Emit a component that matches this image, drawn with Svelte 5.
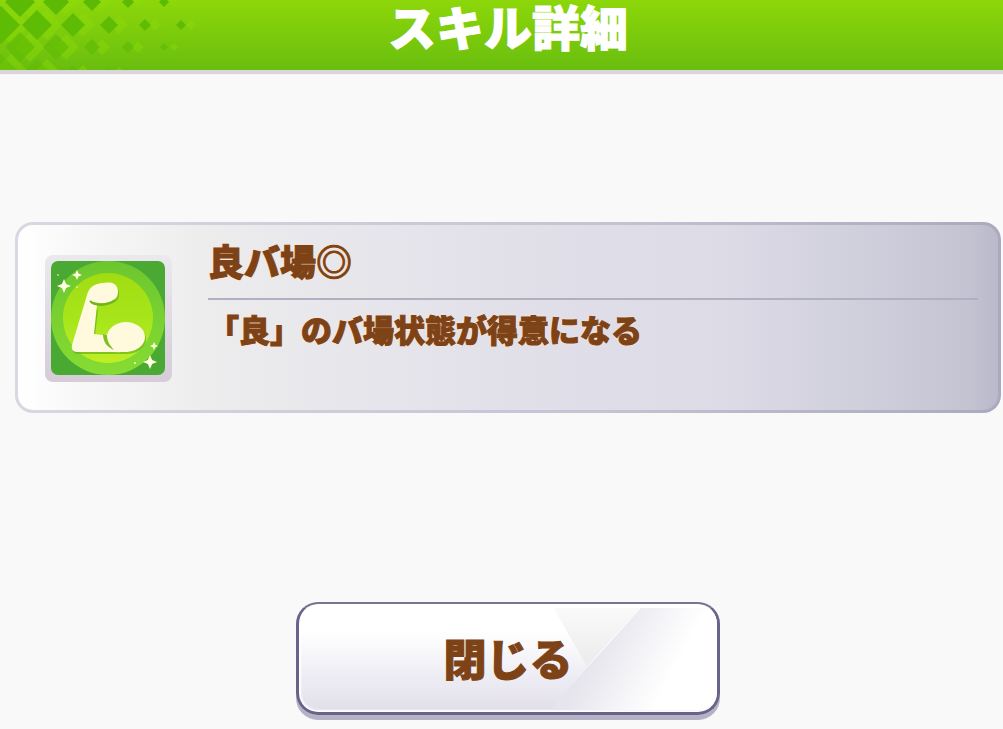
<script>
  const skill = {
    name: '良バ場◎',
    description: '「良」のバ場状態が得意になる'
  };

  let open = true;

  // Header diamonds get smaller towards the right
  const rows = [
    { y: 2, start: 20, sizes: [15, 13, 9, 6, 5], opacity: 1 },
    { y: 25, start: 1, sizes: [19, 15, 12, 9, 6, 5], opacity: 0.95 },
    { y: 47, start: 20, sizes: [15, 13, 8, 6, 4], opacity: 0.65 },
    { y: 71, start: 1, sizes: [17, 12, 6, 4], opacity: 0.5 }
  ];

  const diamonds = rows.flatMap(row =>
    row.sizes.map((r, i) => ({ x: row.start + i * 36, y: row.y, r, opacity: row.opacity }))
  );

  function diamond(x, y, r) {
    return `M${x - r} ${y}L${x} ${y - r}L${x + r} ${y}L${x} ${y + r}Z`;
  }

  function sparkle(x, y, r) {
    const k = r * 0.3;
    return `M${x} ${y - r}L${x + k} ${y - k}L${x + r} ${y}L${x + k} ${y + k}L${x} ${y + r}L${x - k} ${y + k}L${x - r} ${y}L${x - k} ${y - k}Z`;
  }
</script>

{#if open}
  <div class="dialog">
    <header>
      <svg class="pattern" width="220" height="70" viewBox="0 0 220 70" aria-hidden="true">
        {#each diamonds as d}
          <path d={diamond(d.x + 10, d.y, d.r)} fill="#8edc08" opacity="0.4" />
        {/each}
        {#each diamonds as d}
          <path d={diamond(d.x, d.y, d.r)} fill="#5dba04" opacity={d.opacity} />
        {/each}
      </svg>
      <h1>スキル詳細</h1>
    </header>

    <main>
      <section class="skill">
        <svg class="icon" width="128" height="128" viewBox="0 0 128 128" aria-hidden="true">
          <defs>
            <linearGradient id="frame" x1="0" y1="0" x2="0" y2="1">
              <stop offset="0" stop-color="#ebe9ee" />
              <stop offset="1" stop-color="#d5ccd7" />
            </linearGradient>
            <linearGradient id="ring" x1="0" y1="0" x2="0" y2="1">
              <stop offset="0" stop-color="#6cc62f" />
              <stop offset="1" stop-color="#86dc32" />
            </linearGradient>
            <linearGradient id="disc" x1="0" y1="0" x2="0" y2="1">
              <stop offset="0" stop-color="#a0dc10" />
              <stop offset="0.55" stop-color="#a8e61c" />
              <stop offset="1" stop-color="#c1ed24" />
            </linearGradient>
            <clipPath id="tile"><rect x="7" y="7" width="114" height="114" rx="7" /></clipPath>
          </defs>
          <rect x="1" y="1" width="127" height="127" rx="8" fill="url(#frame)" />
          <g clip-path="url(#tile)">
            <rect x="7" y="7" width="114" height="114" fill="#49a933" />
            <circle cx="64" cy="64" r="57" fill="url(#ring)" />
            <circle cx="64" cy="64" r="45" fill="url(#disc)" />
          </g>
          <g fill="#5fae1c" opacity="0.65" transform="translate(1 2)">
            <path d="M43 41C45 33 50 30 58 29C66 28 70 28 73 33C75 38 74 43 70 46C64 50 54 51 47 48L53 54L50 80L58 81C60 88 63 92 69 96L86 98L33 98C29 98 27 95 28 91Z" />
            <ellipse cx="82" cy="83" rx="19" ry="15" />
          </g>
          <g fill="#fffade">
            <path d="M43 41C45 33 50 30 58 29C66 28 70 28 73 33C75 38 74 43 70 46C64 50 54 50 46 47C47 50 50 51 53 51L50 80L58 81L66 80L80 98L33 98C29 98 27 95 28 91Z" />
            <ellipse cx="82" cy="83" rx="19" ry="15" />
            <path d="M68 94L86 98L60 98Z" />
          </g>
          <path d="M46 47C51 52 62 52 71 46" fill="none" stroke="#71b51e" stroke-width="2" />
          <path d="M59 80C59 88 63 93 70 96C66 91 63 88 63 81Z" fill="#82c022" />
          <g fill="#ffffe0">
            <path d={sparkle(20, 32, 7)} />
            <path d={sparkle(33, 21, 5)} />
            <path d={sparkle(106, 108, 7)} />
            <path d={sparkle(110, 92, 4)} />
            <circle cx="14" cy="21" r="1" opacity="0.6" />
            <circle cx="33" cy="33" r="1" opacity="0.6" />
            <circle cx="91" cy="109" r="1" />
          </g>
        </svg>
        <div class="text">
          <h2>{skill.name}</h2>
          <p>{skill.description}</p>
        </div>
      </section>

      <button on:click={() => (open = false)}>
        <svg class="shine" viewBox="0 0 417 104" preserveAspectRatio="none" aria-hidden="true">
          <defs>
            <linearGradient id="shine-top" x1="0" y1="0" x2="0" y2="1">
              <stop offset="0" stop-color="#fafafa" />
              <stop offset="1" stop-color="#ebebec" />
            </linearGradient>
            <linearGradient id="shine-side" gradientUnits="userSpaceOnUse" x1="290" y1="50" x2="362" y2="88">
              <stop offset="0" stop-color="#e6e4ec" />
              <stop offset="1" stop-color="#ffffff" />
            </linearGradient>
          </defs>
          <path d="M254 2H341L287 60Z" fill="url(#shine-top)" />
          <path d="M341 2H417V104H250Z" fill="url(#shine-side)" />
        </svg>
        <span>閉じる</span>
      </button>
    </main>
  </div>
{/if}

<style>
  :global(body) {
    margin: 0;
    background-color: #f9f9f9;
  }

  .dialog {
    font-family: "Noto Sans CJK JP", sans-serif;
    font-weight: 900;
    color: #7d4216;
  }

  header {
    position: relative;
    height: 70px;
    padding: 0 2px 0 15px;
    background: linear-gradient(#8dd70a, #69be0e);
    box-shadow: 0 2px 1px 2px #dad5da;
  }

  .pattern {
    position: absolute;
    left: 0;
    top: 0;
  }

  h1 {
    position: relative;
    margin: 0;
    font-family: "Liberation Sans", "Noto Sans CJK JP", sans-serif;
    font-size: 48px;
    line-height: 60px;
    font-weight: 900;
    text-align: center;
    color: #fff;
    -webkit-text-stroke: 1px #fff;
  }

  main {
    display: flex;
    flex-direction: column;
    align-items: center;
    padding: 152px 2px 8px 15px;
  }

  .skill {
    box-sizing: border-box;
    width: 100%;
    min-height: 191px;
    display: flex;
    gap: 36px;
    padding: 12px 20px 20px 26px;
    border: 3px solid transparent;
    border-radius: 18px;
    background:
      linear-gradient(90deg, #fff 0%, #f8f8f8 6%, #ececed 20%, #e2e1ea 48%, #dcdbe6 72%, #cccbd9 90%, #c4c3d2 97%, #b9b9cb 100%) padding-box,
      linear-gradient(90deg, #d8d7e2, #c4c3d4 60%, #aaa9be) border-box;
  }

  .icon {
    flex: none;
    margin-top: 17px;
  }

  .text {
    flex: 1;
    text-shadow: 0 0 2px #ffdcc0, 0 0 2px #ffdcc0, 0 0 3px #ffe9d8;
  }

  h2 {
    margin: 0;
    padding-bottom: 15px;
    border-bottom: 2px solid #b1b0c3;
    font-size: 36px;
    line-height: 46px;
    font-weight: 900;
    -webkit-text-stroke: 1px #7d4216;
  }

  p {
    margin: 8px 0 0;
    font-size: 31px;
    line-height: 42px;
    -webkit-text-stroke: 1px #7d4216;
  }

  button {
    position: relative;
    width: 424px;
    max-width: 100%;
    height: 113px;
    margin-top: 189px;
    padding: 0 0 2px;
    border: 3px solid #67648a;
    border-top: 2px solid #77748f;
    border-radius: 22px;
    background: linear-gradient(#fff 25%, #e1deea);
    box-shadow: 0 5px 0 #b5b2c6, inset 0 0 2px 2px #fff;
    font: inherit;
    font-size: 43px;
    color: inherit;
    cursor: pointer;
  }

  .shine {
    position: absolute;
    left: 0;
    top: 2px;
    width: 100%;
    height: 104px;
    border-radius: 18px;
  }

  button span {
    position: relative;
    -webkit-text-stroke: 1px #7d4216;
  }
</style>
